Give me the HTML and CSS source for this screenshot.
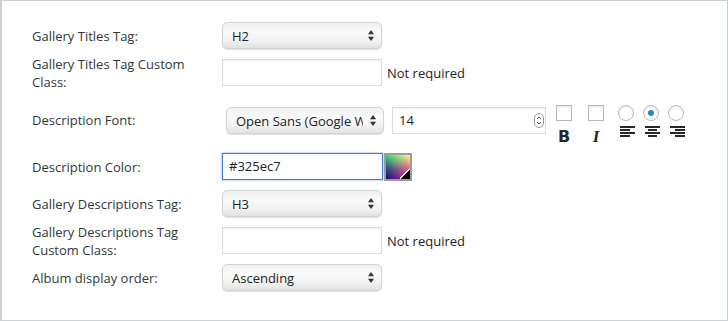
FILE: index.html
```html
<!DOCTYPE html>
<html lang="en">
<head>
  <meta charset="UTF-8" />
  <title>Gallery settings</title>
  <link rel="stylesheet" href="styles.css">
</head>
<body>
  <div class="panel">
    <div class="row">
      <label class="row-label">Gallery Titles Tag:</label>
      <div class="row-field">
        <div class="select"><span class="select-text">H2</span>
          <svg class="arrows" width="6" height="11" viewBox="0 0 6 11"><polygon points="0,4.3 3,0 6,4.3" /><polygon points="0,6.7 6,6.7 3,11" /></svg>
        </div>
      </div>
    </div>

    <div class="row">
      <label class="row-label">Gallery Titles Tag Custom Class:</label>
      <div class="row-field">
        <div class="text-input"></div>
        <span class="hint">Not required</span>
      </div>
    </div>

    <div class="row row-font">
      <label class="row-label">Description Font:</label>
      <div class="row-field">
        <div class="select select-font"><span class="select-text">Open Sans (Google Web Font)</span>
          <svg class="arrows" width="6" height="11" viewBox="0 0 6 11"><polygon points="0,4.3 3,0 6,4.3" /><polygon points="0,6.7 6,6.7 3,11" /></svg>
        </div>
        <div class="text-input number-input"><span>14</span>
          <svg class="spinner" width="10" height="15" viewBox="0 0 10 15"><rect x="0.5" y="0.5" width="9" height="14" rx="4.5" /><polyline points="3,6 5,4 7,6" /><polyline points="3,9 5,11 7,9" /></svg>
        </div>
        <div class="style-options">
          <div class="option">
            <span class="checkbox"></span>
            <span class="icon-bold">B</span>
          </div>
          <div class="option">
            <span class="checkbox"></span>
            <span class="icon-italic">I</span>
          </div>
          <div class="option option-first-radio">
            <span class="radio"></span>
            <svg class="align-icon" width="15" height="11" viewBox="0 0 15 11"><rect x="0" y="0" width="15" height="2" /><rect x="0" y="3" width="10" height="2" /><rect x="0" y="6" width="15" height="2" /><rect x="0" y="9" width="10" height="2" /></svg>
          </div>
          <div class="option option-radio">
            <span class="radio radio-checked"></span>
            <svg class="align-icon" width="15" height="11" viewBox="0 0 15 11"><rect x="0" y="0" width="15" height="2" /><rect x="3" y="3" width="9" height="2" /><rect x="0" y="6" width="15" height="2" /><rect x="3" y="9" width="9" height="2" /></svg>
          </div>
          <div class="option option-radio">
            <span class="radio"></span>
            <svg class="align-icon" width="15" height="11" viewBox="0 0 15 11"><rect x="0" y="0" width="15" height="2" /><rect x="5" y="3" width="10" height="2" /><rect x="0" y="6" width="15" height="2" /><rect x="5" y="9" width="10" height="2" /></svg>
          </div>
        </div>
      </div>
    </div>

    <div class="row">
      <label class="row-label">Description Color:</label>
      <div class="row-field">
        <div class="text-input color-input">#325ec7</div>
        <div class="swatch"></div>
      </div>
    </div>

    <div class="row">
      <label class="row-label">Gallery Descriptions Tag:</label>
      <div class="row-field">
        <div class="select"><span class="select-text">H3</span>
          <svg class="arrows" width="6" height="11" viewBox="0 0 6 11"><polygon points="0,4.3 3,0 6,4.3" /><polygon points="0,6.7 6,6.7 3,11" /></svg>
        </div>
      </div>
    </div>

    <div class="row">
      <label class="row-label">Gallery Descriptions Tag Custom Class:</label>
      <div class="row-field">
        <div class="text-input"></div>
        <span class="hint">Not required</span>
      </div>
    </div>

    <div class="row">
      <label class="row-label">Album display order:</label>
      <div class="row-field">
        <div class="select"><span class="select-text">Ascending</span>
          <svg class="arrows" width="6" height="11" viewBox="0 0 6 11"><polygon points="0,4.3 3,0 6,4.3" /><polygon points="0,6.7 6,6.7 3,11" /></svg>
        </div>
      </div>
    </div>
  </div>
</body>
</html>
```

FILE: styles.css
```css
html, body {
  margin: 0;
  padding: 0;
  background: #fff;
}
body {
  font-family: "Open Sans", "DejaVu Sans", sans-serif;
  font-size: 13px;
  color: #32373c;
}
.panel {
  box-sizing: border-box;
  width: 728px;
  height: 321px;
  border: 1px solid #ccd0d4;
  border-left-width: 2px;
  padding: 16px 0 0 30px;
}
.row {
  display: grid;
  grid-template-columns: 190px 1fr;
  align-items: center;
  height: 37px;
}
.row-label {
  width: 172px;
  line-height: 18px;
}
.row-field {
  display: flex;
  align-items: center;
}
.row-font {
  height: 57px;
  box-sizing: border-box;
  padding-top: 14px;
  align-items: start;
}
.row-font .row-label {
  line-height: 27px;
  margin-top: 2px;
}
.row-font .row-field {
  align-items: flex-start;
}

/* selects */
.select {
  box-sizing: border-box;
  width: 160px;
  height: 27px;
  display: flex;
  align-items: center;
  padding: 0 7px 0 9px;
  border: 1px solid #d3d3d3;
  border-radius: 5px;
  background: linear-gradient(to bottom, #f0f0f0 0%, #fafafa 35%, #f2f2f2 70%, #e2e2e2 100%);
  box-shadow: 0 1px 1px rgba(0, 0, 0, 0.12);
  color: #222;
}
.select-text {
  flex: 1;
  overflow: hidden;
  white-space: nowrap;
}
.arrows {
  fill: #333;
  flex: none;
}
.select-font {
  width: 158px;
  margin: 2px 0 0 4px;
}
.select-font .select-text {
  margin-right: 7px;
}

/* inputs */
.text-input {
  box-sizing: border-box;
  width: 160px;
  height: 27px;
  border: 1px solid #ddd;
  box-shadow: inset 0 1px 2px rgba(0, 0, 0, 0.06);
  background: #fff;
  padding: 0 6px;
  line-height: 25px;
  color: #222;
}
.hint {
  margin-left: 5px;
  color: #222;
}
.number-input {
  width: 154px;
  margin: 2px 0 0 8px;
  display: flex;
  align-items: center;
  justify-content: space-between;
  padding: 0 1px 0 6px;
}
.spinner {
  fill: none;
  stroke: #9a9a9a;
  stroke-width: 1;
}
.spinner polyline {
  stroke: #555;
}
.color-input {
  width: 161px;
  border-color: #4a76d0;
  box-shadow: 0 0 2px rgba(74, 118, 208, 0.7);
  padding-left: 6px;
}
.swatch {
  position: relative;
  box-sizing: border-box;
  width: 28px;
  height: 28px;
  margin: 1px 0 0 1px;
  border: 2px solid #9c9c9c;
  background: linear-gradient(to right, #1d0a7e, #7a1690 50%, #ff1a78);
}
.swatch::before {
  content: "";
  position: absolute;
  inset: 0;
  background: linear-gradient(to right, #30dc70, #9af07c 50%, #f2ff8a);
  -webkit-mask-image: linear-gradient(to bottom, #000, rgba(0, 0, 0, 0.35) 55%, transparent);
  mask-image: linear-gradient(to bottom, #000, rgba(0, 0, 0, 0.35) 55%, transparent);
}
.swatch::after {
  content: "";
  position: absolute;
  right: 0;
  bottom: 0;
  width: 10px;
  height: 10px;
  background: linear-gradient(135deg, transparent 45%, #fff 45%, #fff 55%, #000 55%);
}

/* bold / italic / align options */
.style-options {
  display: flex;
  margin-left: 10px;
}
.option {
  width: 16px;
  display: flex;
  flex-direction: column;
  align-items: center;
  margin-right: 16px;
}
.option-first-radio {
  margin-left: -2px;
  margin-right: 9px;
}
.option-radio {
  margin-right: 9px;
}
.checkbox, .radio {
  box-sizing: border-box;
  width: 16px;
  height: 16px;
  border: 1px solid #b4b9be;
  background: #fff;
  box-shadow: inset 0 1px 2px rgba(0, 0, 0, 0.1);
}
.radio {
  border-radius: 50%;
  display: flex;
  align-items: center;
  justify-content: center;
}
.radio-checked::before {
  content: "";
  width: 6px;
  height: 6px;
  border-radius: 50%;
  background: #1e8cbe;
}
.icon-bold {
  font-family: "DejaVu Sans", sans-serif;
  font-weight: bold;
  font-size: 16px;
  line-height: 16px;
  margin-top: 8px;
  color: #23282d;
}
.icon-italic {
  font-family: "Liberation Serif", serif;
  font-weight: bold;
  font-style: italic;
  font-size: 17px;
  line-height: 16px;
  margin-top: 8px;
  color: #23282d;
}
.align-icon {
  fill: #23282d;
  margin: 5px 0 0 3px;
}
```
